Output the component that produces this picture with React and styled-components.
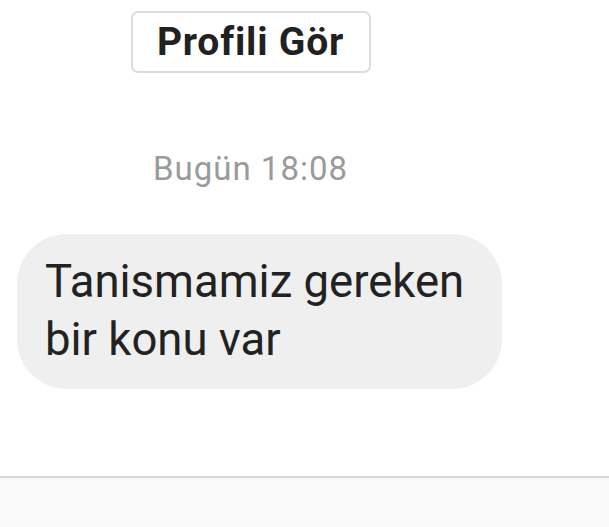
import React from 'react';
import styled, { createGlobalStyle } from 'styled-components';

const GlobalStyle = createGlobalStyle`
  html, body { margin: 0; padding: 0; background: #fff; }
  body { font-family: Roboto, "Noto Sans", sans-serif; }
`;

const Screen = styled.div`
  width: 609px;
  height: 527px;
  display: flex;
  flex-direction: column;
  overflow: hidden;
`;

const Thread = styled.div`
  flex: 1;
  display: flex;
  flex-direction: column;
`;

const Center = styled.div`
  width: 501px;
  display: flex;
  justify-content: center;
`;

const ProfileButton = styled.button`
  margin-top: 11px;
  width: 240px;
  height: 62px;
  box-sizing: border-box;
  border: 2px solid #dcdcdc;
  border-radius: 7px;
  background: #fff;
  font-family: Roboto, sans-serif;
  font-weight: 700;
  font-size: 39px;
  letter-spacing: 0.8px;
  color: #212121;
  padding: 0;
  line-height: 1;
`;

const Stamp = styled.div`
  margin-top: 78px;
  font-size: 33px;
  letter-spacing: 1px;
  color: #9a9a9a;
  line-height: 36px;
`;

const Bubble = styled.div`
  margin: 47px 0 0 17px;
  width: 485px;
  height: 155px;
  box-sizing: border-box;
  padding: 19px 28px 0;
  background: #efefef;
  border-radius: 50px;
  font-size: 45.5px;
  line-height: 58px;
  color: #222;
`;

const Composer = styled.div`
  height: 49px;
  border-top: 2px solid #d6d6d6;
  background: #f9f9f9;
`;

export default function App() {
  return (
    <Screen>
      <GlobalStyle />
      <Thread>
        <Center>
          <ProfileButton>Profili Gör</ProfileButton>
        </Center>
        <Center>
          <Stamp>Bugün 18:08</Stamp>
        </Center>
        <Bubble>
          Tanismamiz gereken
          <br />
          bir konu var
        </Bubble>
      </Thread>
      <Composer />
    </Screen>
  );
}
